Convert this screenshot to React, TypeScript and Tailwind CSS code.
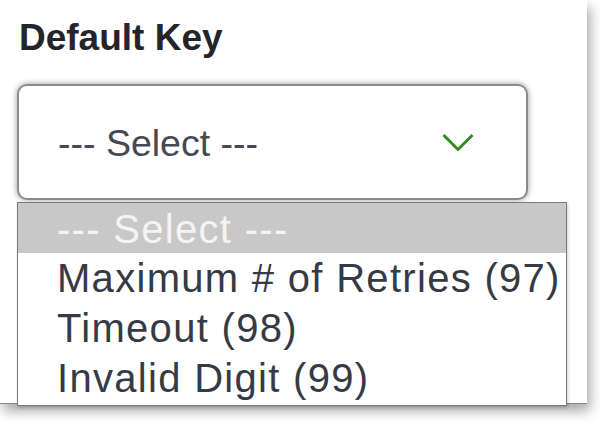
import React from "react";

export default function App() {
  const options = ["Maximum # of Retries (97)", "Timeout (98)", "Invalid Digit (99)"];
  return (
    <div className="w-[600px] h-[432px] bg-white overflow-hidden" style={{ fontFamily: '"Liberation Sans", Arial, sans-serif' }}>
      <div className="relative w-[587px] h-[404px] bg-white border-b border-[#8a8a8a] shadow-[3px_7px_12px_rgba(0,0,0,0.35)] pl-[17px] pt-[18px]">
        <div className="pl-[2px] text-[37px] leading-[40px] font-bold text-[#24252a]">Default Key</div>
        <div className="mt-[26px] w-[511px] h-[116px] rounded-[10px] border-2 border-[#8c8c8c] bg-white shadow-[0_0_6px_rgba(0,0,0,0.4)] flex items-center justify-between pl-[39px] pr-[52px]">
          <span className="text-[37.5px] leading-[44px] text-[#444955] pt-[2px]">--- Select ---</span>
          <svg width="32" height="19" viewBox="0 0 32 19" fill="none">
            <path d="M1.5 2 L16 16.5 L30.5 2" stroke="#348a22" strokeWidth="3" />
          </svg>
        </div>
        <div className="absolute left-[17px] top-[202px] w-[550px] h-[204px] bg-white border border-[#7a7a7a] shadow-[1px_2px_3px_rgba(0,0,0,0.2)]">
          <div className="h-[50px] bg-[#c8c8c8] pl-[39px] text-[40px] leading-[52px] tracking-[1.3px] text-[#f4f4f4] whitespace-nowrap">--- Select ---</div>
          {options.map((o) => (
            <div key={o} className="h-[50px] pl-[39px] text-[40px] leading-[50px] tracking-[1.3px] text-[#363a44] whitespace-nowrap">
              {o}
            </div>
          ))}
        </div>
      </div>
    </div>
  );
}
